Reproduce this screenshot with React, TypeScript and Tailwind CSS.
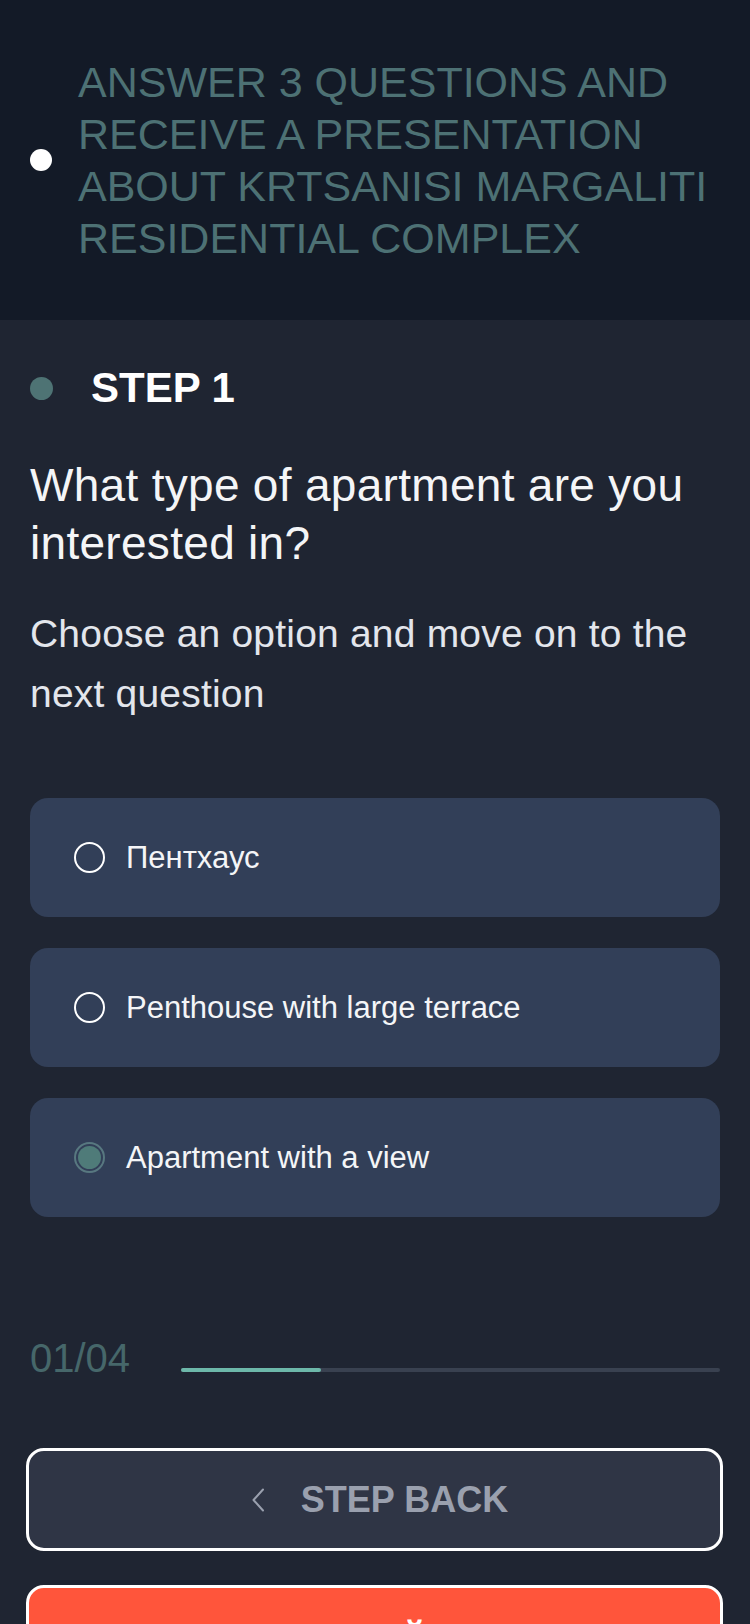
import { useState } from "react";

const OPTIONS = [
  { id: "penthouse", label: "Пентхаус" },
  { id: "terrace", label: "Penthouse with large terrace" },
  { id: "view", label: "Apartment with a view" },
];

function Chevron({ dir }: { dir: "left" | "right" }) {
  return (
    <svg width="14" height="24" viewBox="0 0 14 24" fill="none" className="shrink-0">
      <polyline
        points={dir === "left" ? "12,1.5 2.5,12 12,22.5" : "2,1.5 11.5,12 2,22.5"}
        stroke="currentColor"
        strokeWidth="2"
        strokeLinecap="round"
        strokeLinejoin="round"
      />
    </svg>
  );
}

export default function App() {
  const [selected, setSelected] = useState("view");

  return (
    <div className="w-[750px] h-[1624px] overflow-hidden bg-[#1f2532] font-['Liberation_Sans','Noto_Sans',sans-serif]">

      {/* 헤더 */}
      <div className="h-[320px] bg-[#131a27] flex items-center pl-[30px] pr-[16px]">
        <span className="w-[22px] h-[22px] rounded-full bg-white shrink-0" />
        <p className="ml-[26px] text-[43px] leading-[52px] uppercase text-[#4d7174]">
          Answer 3 questions and receive a presentation about Krtsanisi Margaliti residential complex
        </p>
      </div>

      <div className="px-[30px]">
        {/* 단계 */}
        <div className="mt-[44px] flex items-center h-[48px]">
          <span className="w-[23px] h-[23px] rounded-full bg-[#4e7374] shrink-0" />
          <span className="ml-[38px] text-[42px] leading-[48px] font-bold text-white">STEP 1</span>
        </div>

        <h1 className="mt-[44px] text-[46px] leading-[58px] tracking-[0.3px] text-[#f4f5f7]">
          What type of apartment are you interested in?
        </h1>
        <p className="mt-[32px] text-[39px] leading-[60px] tracking-[0.2px] text-[#e3e6ec]">
          Choose an option and move on to the next question
        </p>

        {/* 옵션 */}
        <div className="mt-[74px] flex flex-col gap-[31px]">
          {OPTIONS.map((o) => {
            const active = o.id === selected;
            return (
              <button
                key={o.id}
                onClick={() => setSelected(o.id)}
                className="h-[119px] w-full rounded-[18px] bg-[#323f58] flex items-center pl-[44px] text-left"
              >
                {active ? (
                  <span className="w-[31px] h-[31px] rounded-full border-2 border-[#587880] flex items-center justify-center shrink-0">
                    <span className="w-[23px] h-[23px] rounded-full bg-[#4f7b79]" />
                  </span>
                ) : (
                  <span className="w-[31px] h-[31px] rounded-full border-2 border-white shrink-0" />
                )}
                <span className="ml-[21px] text-[31px] leading-[40px] text-[#f4f5f7]">{o.label}</span>
              </button>
            );
          })}
        </div>

        {/* 진행 */}
        <div className="mt-[117px] flex items-end h-[48px]">
          <span className="w-[151px] shrink-0 text-[40px] leading-[48px] text-[#46676a]">01/04</span>
          <div className="flex-1 h-[4px] rounded-full bg-[#394150] mb-[10px]">
            <div className="h-full w-[26%] rounded-full bg-[#6db8aa]" />
          </div>
        </div>

        {/* 버튼 */}
        <button className="mt-[66px] -mx-[4px] w-[calc(100%+7px)] h-[103px] rounded-[18px] border-[3px] border-white bg-[#2f3545] flex items-center justify-center gap-[36px] pl-[10px] text-[#9aa0ae]">
          <Chevron dir="left" />
          <span className="text-[36px] leading-[40px] font-bold">STEP BACK</span>
        </button>
        <button className="mt-[34px] -mx-[4px] w-[calc(100%+7px)] h-[103px] rounded-[18px] border-[3px] border-white bg-[#ff553b] flex items-center justify-center gap-[36px] pt-[8px] text-white">
          <span className="text-[36px] leading-[40px] font-bold">СЛЕДУЮЩИЙ ШАГ</span>
          <Chevron dir="right" />
        </button>
      </div>
    </div>
  );
}
